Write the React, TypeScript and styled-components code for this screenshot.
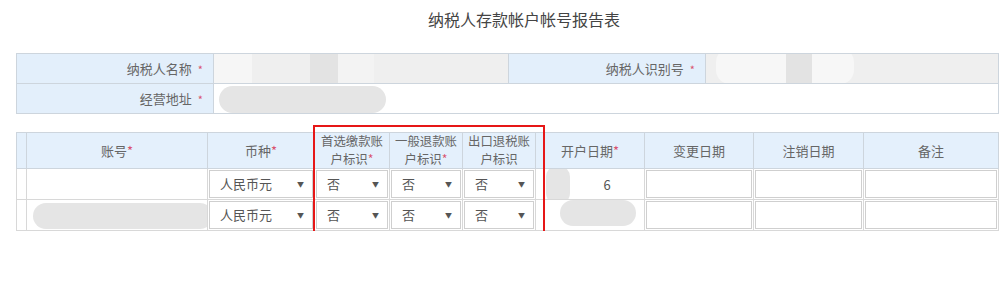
import React from 'react';
import styled, { createGlobalStyle } from 'styled-components';

const GlobalStyle = createGlobalStyle`
  html, body {
    margin: 0;
    padding: 0;
    background: #fff;
    font-family: "Noto Sans CJK SC", "Noto Sans", sans-serif;
    color: #666;
  }
`;

const Page = styled.div`
  padding: 0 8px 0 16px;
  width: 982px;
`;

const Title = styled.h2`
  margin: 0;
  height: 38px;
  line-height: 38px;
  text-align: center;
  font-size: 16px;
  font-weight: normal;
  color: #444;
  padding-left: 34px;
`;

const InfoTable = styled.table`
  margin-top: 15px;
  width: 982px;
  border-collapse: collapse;
  table-layout: fixed;
  font-size: 13px;
`;

const LabelCell = styled.td`
  height: 29px;
  padding: 0 10px 0 0;
  text-align: right;
  background: #e3effb;
  border: 1px solid #cdd5dd;
  color: #666;
`;

const ValueCell = styled.td<{ $grey?: boolean }>`
  position: relative;
  overflow: hidden;
  padding: 0;
  background: ${(p) => (p.$grey ? '#efefef' : '#fff')};
  border: 1px solid #cdd5dd;
`;

const Req = styled.span`
  color: #d9536f;
  font-size: 11px;
  margin-left: 6px;
`;

const HeadReq = styled.span`
  color: #d9536f;
`;

const Blob = styled.div<{ $round?: number; $color?: string }>`
  position: absolute;
  background: ${(p) => p.$color ?? '#e5e5e5'};
  border-radius: ${(p) => p.$round ?? 14}px;
`;

const GridWrap = styled.div`
  position: relative;
  margin-top: 18px;
`;

const GridTable = styled.table`
  width: 982px;
  border-collapse: collapse;
  table-layout: fixed;
  font-size: 13px;
`;

const HeadCell = styled.th`
  height: 34px;
  padding: 0 2px;
  background: #e4f0fc;
  border: 1px solid #cdd5dd;
  font-weight: normal;
  color: #666;
  text-align: center;
`;

const HeadLines = styled.div`
  font-size: 12.4px;
  line-height: 17.5px;
`;

const BodyCell = styled.td`
  position: relative;
  overflow: hidden;
  padding: 1px;
  border: 1px solid #d8d8d8;
  background: #fff;
`;

const FieldBox = styled.div<{ $plain?: boolean }>`
  position: relative;
  height: 28px;
  line-height: 28px;
  border: 1px solid ${(p) => (p.$plain ? 'transparent' : '#cfcfcf')};
  box-sizing: border-box;
  background: #fff;
  color: #555;
  font-size: 13px;
  padding: 0 8px 0 12px;
`;

const DateText = styled.span`
  display: block;
  text-align: center;
  padding-left: 30px;
`;

const SelectBox = styled(FieldBox)`
  display: flex;
  justify-content: space-between;
  align-items: center;
  padding: 0 8px 0 10px;
`;

const Arrow = styled.span`
  font-size: 7px;
  color: #555;
`;

const Highlight = styled.div`
  position: absolute;
  left: 297px;
  top: -7px;
  width: 232px;
  height: 115px;
  border: 2px solid #e61717;
  box-sizing: border-box;
  pointer-events: none;
`;

const colWidths = [10, 181, 107, 75, 73, 73, 109, 109, 110, 135];

function Select({ value }: { value: string }) {
  return (
    <SelectBox>
      <span>{value}</span>
      <Arrow>▼</Arrow>
    </SelectBox>
  );
}

function TwoLine({ first, second, req }: { first: string; second: string; req?: boolean }) {
  return (
    <HeadLines>
      <div>{first}</div>
      <div>
        {second}
        {req && <HeadReq>*</HeadReq>}
      </div>
    </HeadLines>
  );
}

export default function App() {
  const rows = [{ date: '6' }, { date: '' }];
  return (
    <Page>
      <GlobalStyle />
      <Title>纳税人存款帐户帐号报告表</Title>
      <InfoTable>
        <colgroup>
          <col style={{ width: 197 }} />
          <col style={{ width: 295 }} />
          <col style={{ width: 197 }} />
          <col style={{ width: 293 }} />
        </colgroup>
        <tbody>
          <tr>
            <LabelCell>
              纳税人名称<Req>*</Req>
            </LabelCell>
            <ValueCell $grey>
              <Blob $round={0} $color="#f6f6f6" style={{ left: 0, top: 0, width: 38, height: 29 }} />
              <Blob $round={0} $color="#e3e3e3" style={{ left: 96, top: 0, width: 28, height: 29 }} />
              <Blob $round={0} $color="#f3f3f3" style={{ left: 124, top: 0, width: 36, height: 29 }} />
            </ValueCell>
            <LabelCell>
              纳税人识别号<Req>*</Req>
            </LabelCell>
            <ValueCell $grey>
              <Blob $color="#f7f7f7" style={{ left: 10, top: -6, width: 138, height: 36 }} />
              <Blob $round={0} $color="#e3e3e3" style={{ left: 80, top: 0, width: 26, height: 29 }} />
            </ValueCell>
          </tr>
          <tr>
            <LabelCell>
              经营地址<Req>*</Req>
            </LabelCell>
            <ValueCell colSpan={3}>
              <Blob style={{ left: 5, top: 2, width: 167, height: 27 }} />
            </ValueCell>
          </tr>
        </tbody>
      </InfoTable>

      <GridWrap>
        <GridTable>
          <colgroup>
            {colWidths.map((w, i) => (
              <col key={i} style={{ width: w }} />
            ))}
          </colgroup>
          <thead>
            <tr>
              <HeadCell />
              <HeadCell>
                账号<HeadReq>*</HeadReq>
              </HeadCell>
              <HeadCell>
                币种<HeadReq>*</HeadReq>
              </HeadCell>
              <HeadCell>
                <TwoLine first="首选缴款账" second="户标识" req />
              </HeadCell>
              <HeadCell>
                <TwoLine first="一般退款账" second="户标识" req />
              </HeadCell>
              <HeadCell>
                <TwoLine first="出口退税账" second="户标识" />
              </HeadCell>
              <HeadCell>
                开户日期<HeadReq>*</HeadReq>
              </HeadCell>
              <HeadCell>变更日期</HeadCell>
              <HeadCell>注销日期</HeadCell>
              <HeadCell>备注</HeadCell>
            </tr>
          </thead>
          <tbody>
            {rows.map((r, i) => (
              <tr key={i}>
                <BodyCell />
                <BodyCell>
                  <FieldBox $plain />
                  {i === 1 && <Blob style={{ left: 6, top: 3, width: 180, height: 26 }} />}
                </BodyCell>
                <BodyCell>
                  <Select value="人民币元" />
                </BodyCell>
                <BodyCell>
                  <Select value="否" />
                </BodyCell>
                <BodyCell>
                  <Select value="否" />
                </BodyCell>
                <BodyCell>
                  <Select value="否" />
                </BodyCell>
                <BodyCell>
                  <FieldBox $plain>
                    <DateText>{r.date}</DateText>
                  </FieldBox>
                  {i === 0 && <Blob style={{ left: 10, top: -4, width: 24, height: 40 }} />}
                  {i === 1 && <Blob style={{ left: 24, top: 0, width: 76, height: 26 }} />}
                </BodyCell>
                <BodyCell>
                  <FieldBox />
                </BodyCell>
                <BodyCell>
                  <FieldBox />
                </BodyCell>
                <BodyCell>
                  <FieldBox />
                </BodyCell>
              </tr>
            ))}
          </tbody>
        </GridTable>
        <Highlight />
      </GridWrap>
    </Page>
  );
}
